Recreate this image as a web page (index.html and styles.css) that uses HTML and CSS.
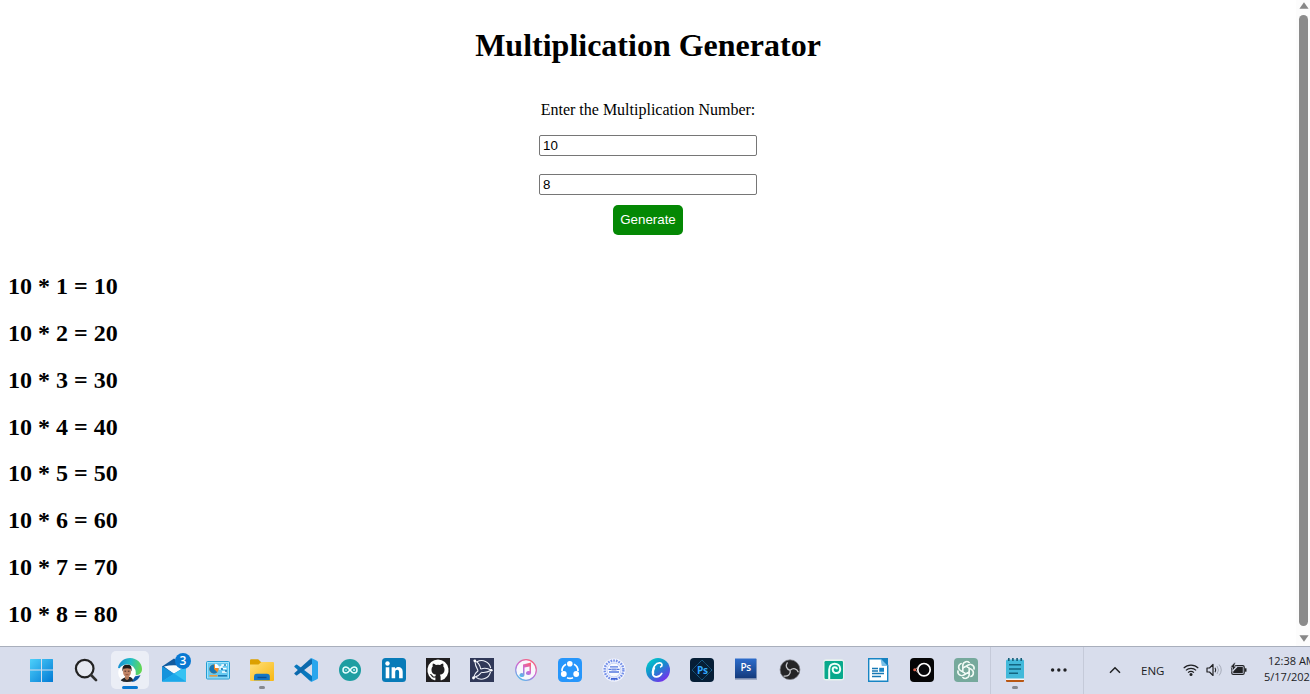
FILE: index.html
```html
<!DOCTYPE html>
<html lang="en">
<head>
<meta charset="utf-8">
<title>Multiplication Generator</title>
<link rel="stylesheet" href="styles.css">
</head>
<body>
<div class="viewport">
  <main class="page">
    <h1 class="title">Multiplication Generator</h1>
    <form class="form">
      <label class="label" for="number">Enter the Multiplication Number:</label>
      <input class="field" id="number" type="text" value="10">
      <input class="field" id="limit" type="text" value="8" aria-label="Limit">
      <button class="generate" type="button">Generate</button>
    </form>
    <section class="results">
      <h2 class="row">10 * 1 = 10</h2>
      <h2 class="row">10 * 2 = 20</h2>
      <h2 class="row">10 * 3 = 30</h2>
      <h2 class="row">10 * 4 = 40</h2>
      <h2 class="row">10 * 5 = 50</h2>
      <h2 class="row">10 * 6 = 60</h2>
      <h2 class="row">10 * 7 = 70</h2>
      <h2 class="row">10 * 8 = 80</h2>
    </section>
  </main>
  <div class="scrollbar">
    <svg class="arrow" viewBox="0 0 10 7"><path d="M5 0.3 9.6 6.7H.4z" fill="#878787"/></svg>
    <div class="thumb"></div>
    <svg class="arrow" viewBox="0 0 10 7"><path d="M5 6.7.4.3h9.2z" fill="#878787"/></svg>
  </div>
</div>
<footer class="taskbar">
  <div class="apps">
    <!-- Start -->
    <div class="slot"><svg class="icon" viewBox="0 0 24 24"><defs><linearGradient id="win" x1="0" y1="0" x2="24" y2="24" gradientUnits="userSpaceOnUse"><stop stop-color="#4fd2fb"/><stop offset="1" stop-color="#0078d4"/></linearGradient></defs><path fill="url(#win)" d="M0 1.500A.5.5 0 0 1 .5 1H11v10.500H0zM12 1h10.500a.5.5 0 0 1 .5.5v10H12zM0 12.500h11V24H.5a.5.5 0 0 1-.5-.5zM12 12.500h11v11a.5.5 0 0 1-.5.5H12z"/></svg></div>
    <!-- Search -->
    <div class="slot"><svg class="icon" viewBox="0 0 24 24"><circle cx="10.700" cy="10.600" r="8.800" fill="#e6e9f1" stroke="#222" stroke-width="2.200"/><path d="m17 17 5 5.100" stroke="#303030" stroke-width="2.700" stroke-linecap="round"/></svg></div>
    <!-- Edge -->
    <div class="slot slot-active"><svg class="icon" viewBox="0 0 24 24"><defs><linearGradient id="ed" x1="0" y1="5" x2="24" y2="10" gradientUnits="userSpaceOnUse"><stop stop-color="#168dd4"/><stop offset=".5" stop-color="#24bfc5"/><stop offset="1" stop-color="#65d84d"/></linearGradient></defs><path d="M0 10C1 4 6 0 12 0c7 0 12 5 12 11 0 4-3 6-6 6l-5-5z" fill="url(#ed)"/><path d="M14 17c3 2 6 1 8.500 0-1.500 4-5 7-9 7z" fill="#0d5aa8"/><circle cx="9" cy="15" r="8.800" fill="#fff"/><path d="M2.800 22.500Q4 20 9 19t6.200 3.500Q13 24 9 24t-6.200-1.500z" fill="#24272b"/><path d="M7 17h4v3.800l-2 1.400-2-1.400z" fill="#b17858"/><ellipse cx="9" cy="13.800" rx="4" ry="5.300" fill="#c18465"/><path d="M4.600 13.500C4 8.300 5.500 6.800 9.200 6.800s5 1.900 4.200 6.700l-1-2.700q-3.200-1.200-6.800 0z" fill="#211b1a"/><path d="M6.500 13.200h1.700m1.600 0h1.700" stroke="#3c2620" stroke-width=".9"/><path d="M7.500 16.700h3" stroke="#814a39" stroke-width=".8"/></svg></div>
    <!-- Mail -->
    <div class="slot slot-mail"><svg class="icon" viewBox="0 0 24 24"><path d="M0 8.500 12 .5l12 8v6H0z" fill="#105a9f"/><path d="M2 8.500Q12 6 21 8.500v5L12 16z" fill="#f5f9fc"/><path d="M0 8.300V23.500h24V8.300L12 15.500z" fill="#1593dc"/><path d="M24 8.300v15.200H0z" fill="#36c2f2"/><path d="m12 15.500 12 8H0z" fill="#1ba8ea"/></svg><span class="badge">3</span></div>
    <!-- Control panel -->
    <div class="slot"><svg class="icon" viewBox="0 0 24 24"><rect x=".5" y="3.500" width="23" height="17.500" rx="1" fill="#a4e4fb" stroke="#239dd3"/><rect x="2" y="5" width="20" height="14.500" fill="#65c9f1"/><circle cx="8" cy="11" r="4.600" fill="#f28a25"/><path d="M8 11V6.400A4.600 4.600 0 1 0 11.300 14.200z" fill="#1677b5"/><path d="M9 10V5.800a4.500 4.500 0 0 1 4.200 4.200z" fill="#fff"/><path d="M14 12v-3h2V7h5M16.500 10.500h4M16 14h4.500" fill="none" stroke="#fff" stroke-width="1.300"/><path d="M19 6v2m-3 2v2m4 0v2" stroke="#126ca7" stroke-width="1.300"/><path d="M3.500 17.800h8" stroke="#f39a36" stroke-width="1.500"/><path d="M12 17.800h9" stroke="#126ca7" stroke-width="1.300"/></svg></div>
    <!-- Explorer -->
    <div class="slot slot-open"><svg class="icon" viewBox="0 0 24 24"><defs><linearGradient id="fd" x1="0" y1="0" x2="1" y2="1"><stop stop-color="#ffe07a"/><stop offset="1" stop-color="#f8b712"/></linearGradient></defs><path d="M0 2.500A1.200 1.200 0 0 1 1.200 1.300h7L11 4H23v9H0z" fill="#dca000"/><path d="M0 6.500h8.500L11.300 4H23a1 1 0 0 1 1 1v17a1 1 0 0 1-1 1H1a1 1 0 0 1-1-1z" fill="url(#fd)"/><path d="M4 22.200v-3.700q0-2.800 2.800-2.800h10.100q2.900 0 2.900 2.800v3.700z" fill="#1476c5"/><path d="M7.500 19.500h9" stroke="#0b4d91" stroke-width="1.400"/></svg></div>
    <!-- VS Code -->
    <div class="slot"><svg class="icon" viewBox="0 0 24 24"><path d="M.5 8 2 6.700q.6-.4 1.200 0L18 18v5L15.800 22.800.5 9q-.5-.5 0-1z" fill="#0877bd"/><path d="M.5 16 2 17.300q.6.400 1.200 0L18 6V1L15.800 1.200.5 15q-.5.500 0 1z" fill="#0b69ad"/><path d="M17.300.1 23 2.700q1 .5 1 1.500v15.600q0 1-1 1.500l-5.700 2.600q-1 .1-1.600-.8 2.300.9 2.300-1.200V2.100q0-2.100-2.300-1.200.6-.9 1.600-.8z" fill="#29a6ed"/></svg></div>
    <!-- Arduino -->
    <div class="slot"><svg class="icon" viewBox="0 0 24 24"><circle cx="12" cy="12" r="11" fill="#1e9ea2"/><path d="M12 12c-1.500-2-2.500-3-4-3a3 3 0 0 0 0 6c1.500 0 2.500-1 4-3s2.500-3 4-3a3 3 0 0 1 0 6c-1.500 0-2.500-1-4-3z" fill="none" stroke="#e7ffff" stroke-width="1.500"/><path d="M6.900 12H9m6 0h2.100m-1.050-1v2" stroke="#e7ffff" stroke-width=".8"/></svg></div>
    <!-- LinkedIn -->
    <div class="slot"><svg class="icon" viewBox="0 0 24 24"><rect width="24" height="24" rx="3.500" fill="#087bb8"/><circle cx="5.500" cy="5.500" r="2.200" fill="#fff"/><path d="M3.700 9.200h3.600v11H3.700zM9.600 9.200H13v1.500c2-2.800 7.700-2.500 7.700 3v6.500h-3.600v-6c0-3.200-3.900-3-3.900 0v6H9.600z" fill="#fff"/></svg></div>
    <!-- GitHub -->
    <div class="slot"><svg class="icon" viewBox="0 0 24 24"><path d="M0 0h24v24H0z" fill="#211f21"/><path d="M12 1.500A10.700 10.700 0 0 0 8.600 22.300c.6.100.8-.200.800-.6v-2.100c-3 .7-3.700-1.100-4.300-2-.4-.7-1-1-1.200-1.400 1.500-.5 2.300 1 3 1.700.8.700 1.700.6 2.500.3.100-.7.400-1.200.8-1.500-3-.4-4.700-1.600-4.700-5.200 0-1.300.4-2.300 1.200-3-.2-.8-.2-1.900.2-2.900 1.100 0 2.300.8 3 1.300a10 10 0 0 1 4.200 0c.7-.5 1.900-1.300 3-1.300.4 1 .4 2.100.2 2.900.8.700 1.200 1.700 1.200 3 0 3.600-1.700 4.800-4.700 5.200.5.500.8 1.200.8 2.300v2.700c0 .4.200.7.800.6A10.700 10.700 0 0 0 12 1.500z" fill="#fff"/></svg></div>
    <!-- Orbit client -->
    <div class="slot"><svg class="icon" viewBox="0 0 24 24"><path d="M0 0h24v24H0z" fill="#303858"/><g fill="none" stroke="#edf0f7" stroke-width="1.100"><path d="M7 3.700a9.300 9.300 0 0 1 13.700 6.400M20.500 13.800A9.300 9.300 0 0 1 6 19.400"/><path d="M4.800 2.800C7.500 4 10 7 10.700 11.200M4.800 2.800C5 7 6.500 10 8 12.500M8.300 12.500C5.500 14.500 4.200 17 3.600 19.600c3.400-.8 6-2.600 7.800-5.100M11 11c3.500-1.300 7-.7 10.200 1.200-3.200 1.800-6.500 2.700-9.800 2"/></g><circle cx="4.800" cy="2.800" r="1.400" fill="#fff"/><circle cx="3.500" cy="20" r="1.400" fill="#fff"/><circle cx="21.300" cy="12.200" r="1.300" fill="#fff"/></svg></div>
    <!-- Music -->
    <div class="slot"><svg class="icon" viewBox="0 0 24 24"><defs><linearGradient id="mu" x1=".8" y1="0" x2=".2" y2="1"><stop stop-color="#fb6177"/><stop offset=".5" stop-color="#c869d8"/><stop offset="1" stop-color="#4fbdec"/></linearGradient></defs><circle cx="12" cy="12" r="10.300" fill="#f8f8fc" stroke="url(#mu)" stroke-width="1.200"/><path d="m9 6.500 8-1.900V15a2.500 2 0 1 1-1.500-1.800V8.400l-5 1.200V17A2.500 2 0 1 1 9 15.200z" fill="url(#mu)"/></svg></div>
    <!-- SHAREit -->
    <div class="slot"><svg class="icon" viewBox="0 0 24 24"><rect width="24" height="24" rx="4.500" fill="#2696fb"/><g fill="none" stroke="#fff" stroke-width="1.700"><path d="M8 6.200a7.500 7.500 0 0 0-4 7M9 19.700q3 1.200 6 0M20 13a7.500 7.500 0 0 0-4-6.800"/></g><circle cx="11.800" cy="5.800" r="2.800" fill="#fff"/><circle cx="5.800" cy="16" r="2.900" fill="#fff"/><circle cx="18.200" cy="16" r="2.900" fill="#fff"/></svg></div>
    <!-- College seal -->
    <div class="slot"><svg class="icon" viewBox="0 0 24 24"><circle cx="12" cy="12" r="11.500" fill="#f5f7ff"/><circle cx="12" cy="12" r="9.400" fill="none" stroke="#7590e8" stroke-width="2.400" stroke-dasharray="1.700 1"/><circle cx="12" cy="12" r="7" fill="#f8faff" stroke="#aabbf2" stroke-width=".7"/><path d="M8 8.800h8M6.500 11.300h3m5 0h3M7 14h10" stroke="#5579e0" stroke-width="1.300"/><path d="M9.500 10.500h5v2h-5z" fill="#7892e5"/><path d="M9 20.800h6" stroke="#3f62d6" stroke-width="1.700"/></svg></div>
    <!-- Canva -->
    <div class="slot"><svg class="icon" viewBox="0 0 24 24"><defs><linearGradient id="cv" x1=".1" y1=".1" x2=".75" y2="1"><stop stop-color="#00c8ca"/><stop offset=".45" stop-color="#168cce"/><stop offset="1" stop-color="#7d28ef"/></linearGradient></defs><circle cx="12" cy="12" r="12" fill="url(#cv)"/><path d="M14.700 8.800c1.900-.8 1.800-3.800-.8-3.900C9.700 4.700 6.500 9.600 6.500 14c0 3 1.600 4.900 4 4.900 2.200 0 4-1.300 5.300-3.500" fill="none" stroke="#fff" stroke-width="1.700" stroke-linecap="round"/><path d="M8.700 9.300Q6.700 13 7.500 16" fill="none" stroke="#fff" stroke-width="1.500"/></svg></div>
    <!-- Photoshop Express -->
    <div class="slot"><svg class="icon" viewBox="0 0 24 24"><rect width="24" height="24" rx="4" fill="#061e36"/><path d="M12 2 22 12 12 22 2 12z" fill="none" stroke="#2378ac" stroke-width=".9" stroke-dasharray="1.200 .6"/><text class="ps" x="12.300" y="15.800" text-anchor="middle" fill="#31a8ff">Ps</text></svg></div>
    <!-- Photoshop -->
    <div class="slot"><svg class="icon" viewBox="0 0 24 24"><defs><linearGradient id="ps" x1="0" y1="0" x2="0" y2="1"><stop stop-color="#2d6dcc"/><stop offset="1" stop-color="#143a7b"/></linearGradient></defs><path d="M1 1h22v21H1z" fill="#a1acc5"/><path d="M1 .5h21.300v19.800H1z" fill="url(#ps)"/><text class="ps ps-light" x="11.600" y="13" text-anchor="middle" fill="#fff">Ps</text></svg></div>
    <!-- OBS -->
    <div class="slot"><svg class="icon" viewBox="0 0 24 24"><circle cx="12" cy="11.700" r="9.900" fill="#252527" stroke="#77797f" stroke-width=".7"/><g fill="none" stroke="#c5c6ca" stroke-width="1.300"><path d="M12.200 12.300C8 11 7.300 7.500 9.500 4.300"/><path d="M12.200 12.300c3.200-3 6.700-1.600 8.200 2"/><path d="M12.200 12.300c.7 4.200-2.400 6.400-6.600 5.800"/></g></svg></div>
    <!-- Photopea -->
    <div class="slot"><svg class="icon" viewBox="0 0 24 24"><rect x="1.200" y="1.200" width="21" height="21.300" rx="3" fill="#e7f2ed"/><rect x="2.500" y="3" width="18.500" height="18" rx="1.200" fill="#08a98c"/><path d="M7.200 21V11.500c0-8 11-7.200 11-.6 0 5.400-7.500 5.300-7.500.6 0-3 4.200-2.800 4.200-.2" fill="none" stroke="#effff9" stroke-width="2"/></svg></div>
    <!-- Writer -->
    <div class="slot"><svg class="icon" viewBox="0 0 24 24"><path d="M2.700.800h12.500l6.500 6.500v15.900h-19z" fill="#fff" stroke="#1785c4" stroke-width="1.400"/><path d="M14.500.100H22V8z" fill="#1682c1"/><path d="m14.500.500 7.300 7.500h-6z" fill="#78c0e8"/><path d="M6 10.500h6M6 13h6M6 15.500h12M6 18.500h9" stroke="#1778b4" stroke-width="1.300"/><path d="M13.200 9.800H18v4h-4.800z" fill="#1885c5"/></svg></div>
    <!-- Recorder -->
    <div class="slot"><svg class="icon" viewBox="0 0 24 24"><rect width="24" height="24" rx="4" fill="#050506"/><circle cx="14" cy="11.700" r="6.200" fill="#08090b" stroke="#fff" stroke-width="1.700"/><path d="m8.300 8.600-3.300 3.100 3.300 3.100" fill="none" stroke="#bcaaa7" stroke-width="1"/><circle cx="4.700" cy="11.800" r="1.500" fill="#df654d"/></svg></div>
    <!-- ChatGPT -->
    <div class="slot"><svg class="icon" viewBox="0 0 24 24"><path d="M4 0h16a4 4 0 0 1 4 4v20H4a4 4 0 0 1-4-4V4a4 4 0 0 1 4-4z" fill="#76a99c"/><g transform="translate(12 12)" fill="none" stroke="#f1faf5" stroke-width="1.200"><path id="petal" d="M-3.200 1.800v-6.400a3.900 3.900 0 0 1 6.900-2.500M-3.200-1.900l5.500-3.200a4 4 0 0 1 5.600 4.500"/><use href="#petal" transform="rotate(60)"/><use href="#petal" transform="rotate(120)"/><use href="#petal" transform="rotate(180)"/><use href="#petal" transform="rotate(240)"/><use href="#petal" transform="rotate(300)"/></g></svg></div>
  </div>
  <div class="recent">
    <!-- Notepad -->
    <div class="slot slot-open"><svg class="icon" viewBox="0 0 24 24"><path d="M3 20h18v3a1 1 0 0 1-1 1H4a1 1 0 0 1-1-1z" fill="#b95713"/><path d="M3 19h18v3H3z" fill="#f4f6f7"/><path d="M3 3a1.500 1.500 0 0 1 1.500-1.500h15A1.500 1.500 0 0 1 21 3v17.500H3z" fill="#42b9da"/><path d="M5.800 0v3m4.100-3v3m4.200-3v3m4.100-3v3" stroke="#145e79" stroke-width="1.600"/><path d="M6 6.700h12M6 11h12M6 15.300h9" stroke="#126580" stroke-width="1.600"/></svg></div>
    <div class="slot"><svg class="icon" viewBox="0 0 24 24"><g fill="#202124"><circle cx="5.600" cy="12" r="1.700"/><circle cx="11.800" cy="12" r="1.700"/><circle cx="18" cy="12" r="1.700"/></g></svg></div>
  </div>
  <div class="tray">
    <svg class="chevron" viewBox="0 0 12 8"><path d="m1 6.700 5-5 5 5" fill="none" stroke="#202124" stroke-width="1.500"/></svg>
    <span class="lang">ENG</span>
    <svg class="wifi" viewBox="0 0 16 14"><g fill="none" stroke="#202124" stroke-width="1.200"><path d="M.7 5.100a10.300 10.300 0 0 1 14.600 0M2.900 7.400a7.200 7.200 0 0 1 10.200 0M5.100 9.600a4.100 4.100 0 0 1 5.800 0"/></g><circle cx="8" cy="11.400" r="1.500" fill="#202124"/></svg>
    <svg class="volume" viewBox="0 0 17 14"><path d="M1 5h2.500L7 1.500v11L3.500 9H1z" fill="none" stroke="#202124" stroke-width="1.200" stroke-linejoin="round"/><path d="M9 4.800q1.500 2.200 0 4.400" fill="none" stroke="#202124" stroke-width="1.100"/><path d="M11 3q3 4 0 8M13.100 1.500q4.300 5.500 0 11" fill="none" stroke="#a6abb8" stroke-width="1"/></svg>
    <svg class="battery" viewBox="0 0 17 14"><rect x="1.800" y="2.600" width="12.400" height="8.800" rx="1.500" fill="none" stroke="#202124" stroke-width="1.200"/><path d="M7.500 4h5.300v6H3.200V8.500z" fill="#202124"/><path d="M14.800 5.300h1.700v3.400h-1.700z" fill="#202124"/><path d="M4-.200.3 4.600H2.600L2 8.300 6.500 3.200H4.300L5.500-.200z" fill="#202124" stroke="#d8ddec" stroke-width=".6"/></svg>
    <div class="clock"><span>12:38 AM</span><span>5/17/202</span></div>
  </div>
</footer>
</body>
</html>
```
FILE: styles.css
```css
* { box-sizing: border-box; }
body {
  margin: 0;
  width: 1310px;
  height: 694px;
  overflow: hidden;
  display: flex;
  flex-direction: column;
  background: #fff;
  color: #000;
  font-family: "Liberation Serif", serif;
}
.viewport { display: flex; height: 646px; }
.page { flex: 1; padding: 27px 0 0 8px; overflow: hidden; }
.title { margin: 0 8px 0 0; font-size: 32px; line-height: 37px; text-align: center; }
.form { display: flex; flex-direction: column; align-items: center; margin-right: 8px; padding-top: 37px; }
.label { font-size: 16px; line-height: 18px; margin-bottom: 16px; }
.field {
  width: 218px;
  height: 21px;
  margin: 0 0 18px;
  padding: 1px 3px;
  border: 1px solid #767676;
  border-radius: 2px;
  background: #fff;
  color: #000;
  font: 13.333px "Liberation Sans", sans-serif;
}
#limit { margin-bottom: 10px; }
.generate {
  width: 70px;
  height: 30px;
  padding: 0 0 2px;
  border: 0;
  border-radius: 5px;
  background: #048804;
  color: #fff;
  font: 13.333px "Liberation Sans", sans-serif;
}
.results { padding-top: 38px; }
.row { margin: 0 0 19.86px; font-size: 24px; line-height: 27px; }
.scrollbar {
  width: 14px;
  display: flex;
  flex-direction: column;
  align-items: center;
  padding: 2px 0 4px 1px;
  background: #fcfcfc;
}
.arrow { width: 10px; height: 7px; flex: none; }
.thumb { width: 9px; flex: 1; margin: 6px 0 9px; border-radius: 5px; background: #8b8b8b; }

.taskbar {
  display: flex;
  height: 48px;
  border-top: 1px solid #a9afbc;
  background: #d8ddec;
  color: #202124;
  font-family: "Open Sans", "Noto Sans", sans-serif;
}
.apps { display: flex; width: 990px; padding-left: 20px; }
.recent {
  display: flex;
  width: 94px;
  padding-left: 2px;
  border-left: 1px solid #c5cad9;
  border-right: 1px solid #c5cad9;
}
.slot {
  position: relative;
  display: flex;
  flex: none;
  width: 44px;
  height: 46px;
  align-items: center;
  justify-content: center;
}
.icon { display: block; width: 24px; height: 24px; }
.slot-active { width: 38px; height: 38px; margin: 4px 3px; border-radius: 5px; background: #ebeef6; }
.slot-active::after,
.slot-open::after {
  content: "";
  position: absolute;
  left: 50%;
  bottom: 0;
  width: 16px;
  height: 3px;
  transform: translateX(-50%);
  border-radius: 2px;
  background: #0878d2;
}
.slot-open::after { width: 6px; bottom: 4px; background: #85888f; }
.badge {
  position: absolute;
  left: 23px;
  top: 6px;
  width: 16px;
  height: 16px;
  border-radius: 50%;
  background: #0878d2;
  color: #fff;
  font-size: 12px;
  font-weight: 600;
  line-height: 16px;
  text-align: center;
}
.ps { font: bold 10px "Open Sans", sans-serif; letter-spacing: -0.3px; }
.ps-light { font-weight: 600; }
.tray { display: flex; flex: 1; align-items: center; padding-left: 25px; overflow: hidden; }
.tray > * { flex: none; }
.chevron { width: 12px; height: 8px; margin-bottom: 2px; }
.lang { width: 42px; margin-left: 20px; font-size: 11.5px; line-height: 16px; }
.wifi { width: 16px; height: 14px; margin-bottom: 1px; }
.volume { width: 17px; height: 14px; margin: 0 0 1px 7px; }
.battery { width: 17px; height: 14px; margin: 0 0 2px 7px; overflow: visible; }
.clock { display: flex; flex-direction: column; margin: -3px 0 0 17px; font-size: 11px; line-height: 16px; white-space: nowrap; }
.clock span:first-child { padding-left: 4px; }
```
